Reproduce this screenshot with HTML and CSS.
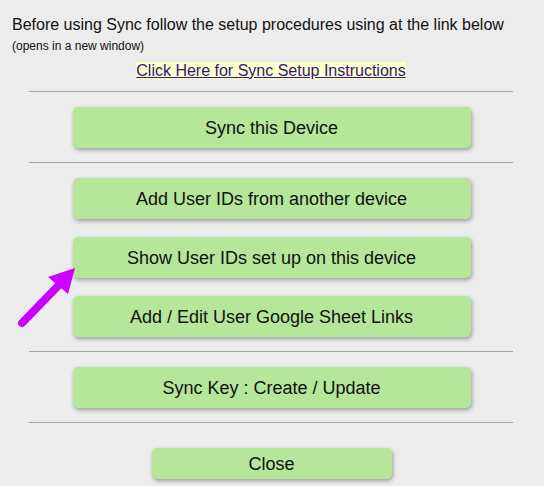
FILE: index.html
```html
<!DOCTYPE html>
<html>
<head>
<meta charset="utf-8">
<link rel="stylesheet" href="styles.css">
</head>
<body>
<div class="panel">
  <p class="intro">Before using Sync follow the setup procedures using at the link below</p>
  <p class="note">(opens in a new window)</p>
  <p class="link-row"><a class="setup-link" href="#">Click Here for Sync Setup Instructions</a></p>
  <hr class="rule">
  <div class="group">
    <button class="btn">Sync this Device</button>
  </div>
  <hr class="rule">
  <div class="group">
    <button class="btn">Add User IDs from another device</button>
    <button class="btn">Show User IDs set up on this device</button>
    <button class="btn">Add / Edit User Google Sheet Links</button>
  </div>
  <hr class="rule">
  <div class="group">
    <button class="btn">Sync Key : Create / Update</button>
  </div>
  <hr class="rule">
  <div class="group close-group">
    <button class="btn btn-close">Close</button>
  </div>
  <svg class="arrow" width="90" height="80" viewBox="0 0 90 80" xmlns="http://www.w3.org/2000/svg">
    <line x1="22" y1="63" x2="58" y2="26" stroke="#cc00ff" stroke-width="8" stroke-linecap="round"/>
    <polygon points="75,8 48,17 68,34" fill="#cc00ff"/>
  </svg>
</div>
</body>
</html>
```

FILE: styles.css
```css
html, body {
  margin: 0;
  padding: 0;
  background: #ececec;
}
body {
  font-family: "Liberation Sans", Arial, sans-serif;
  color: #111;
  width: 544px;
  height: 486px;
  overflow: hidden;
}
.panel {
  position: relative;
  display: flex;
  flex-direction: column;
  padding: 16px 31px 0 29px;
  width: 484px;
}
.intro {
  margin: 0 0 0 -17px;
  font-size: 16px;
  line-height: 18px;
  white-space: nowrap;
}
.note {
  margin: 5px 0 0 -17px;
  font-size: 12px;
  line-height: 14px;
}
.link-row {
  margin: 9px 0 0 0;
  text-align: center;
  font-size: 16px;
  line-height: 18px;
}
.setup-link {
  color: #2e1a78;
  background: #ffffcc;
  text-decoration: underline;
}
.rule {
  margin: 11px 0 0 0;
  height: 0;
  border: 0;
  border-top: 1px solid #a3a3a3;
}
.group {
  display: flex;
  flex-direction: column;
  align-items: center;
  gap: 18px;
  padding: 15px 0 14px;
}
.group + .rule {
  margin-top: 0;
}
.btn {
  width: 398px;
  height: 41px;
  border: 0;
  border-radius: 5px;
  background: #b5e69a;
  box-shadow: 1px 2px 4px rgba(0, 0, 0, 0.35);
  font-family: "Liberation Sans", Arial, sans-serif;
  font-size: 18px;
  color: #111;
  padding: 2px 0 0 0;
  margin-left: 1px;
}
.close-group {
  padding-top: 25px;
}
.btn-close {
  width: 240px;
  height: 31px;
}
.arrow {
  position: absolute;
  left: 0;
  top: 260px;
}
```
